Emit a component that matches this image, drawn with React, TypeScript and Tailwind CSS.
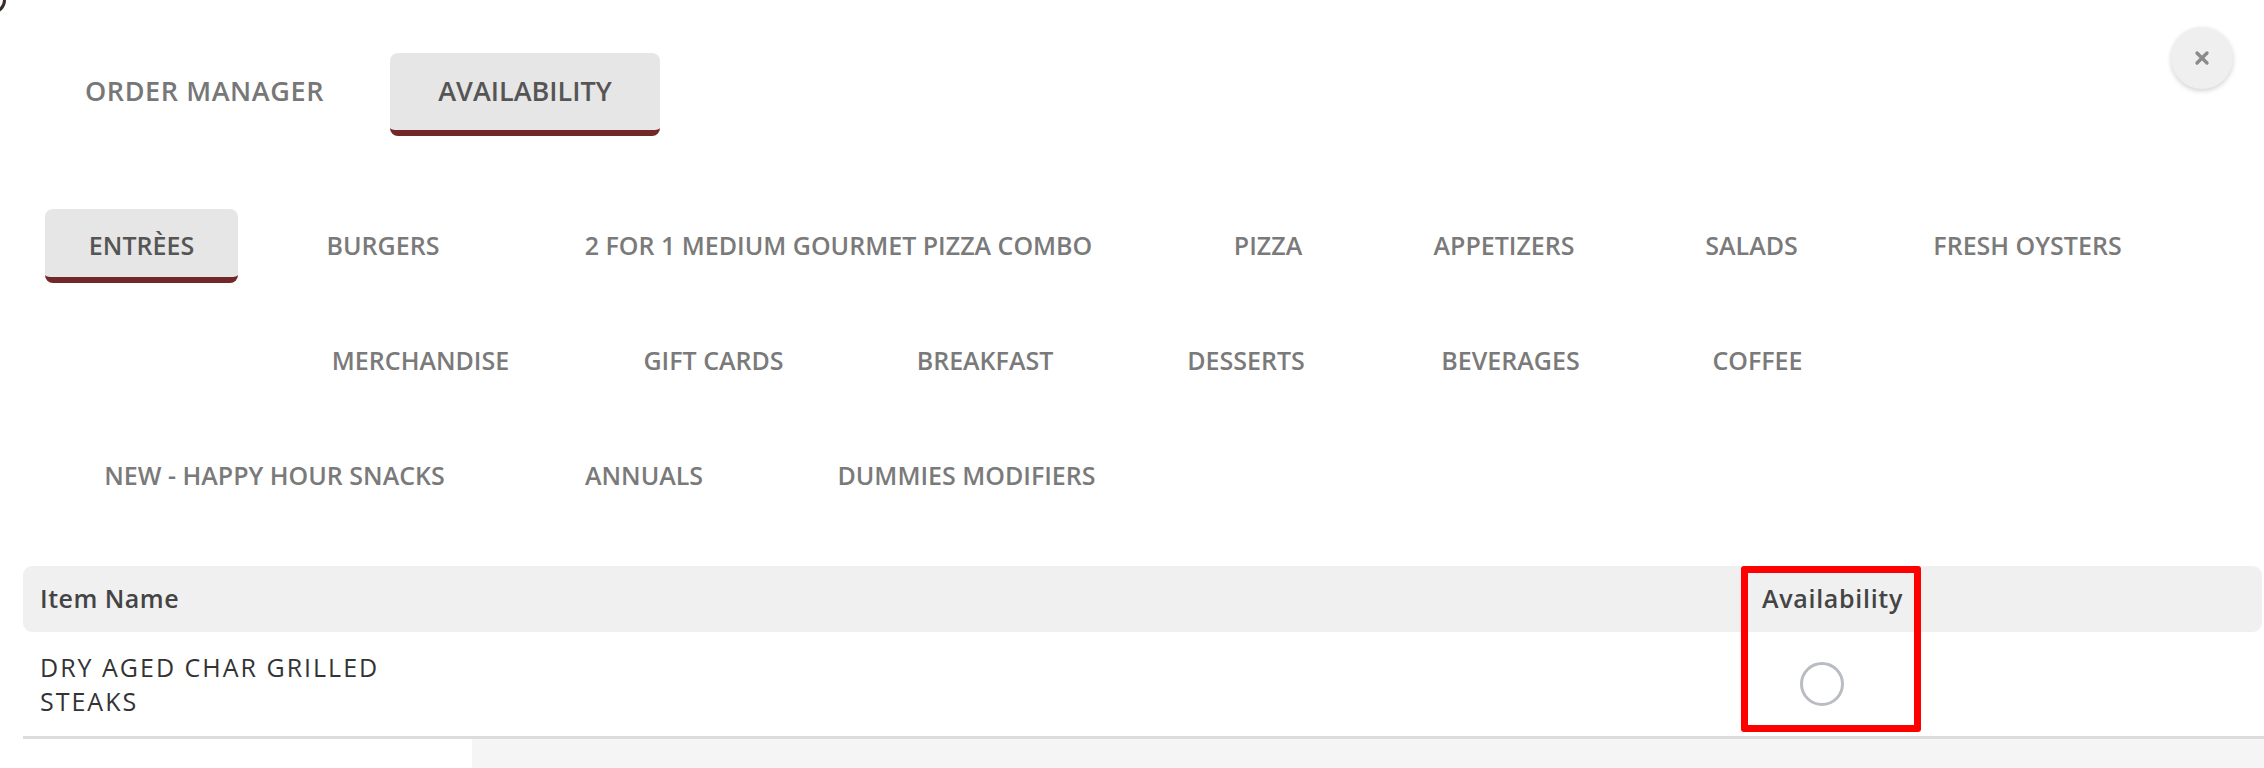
import React from "react";
import { X } from "lucide-react";

const F = "font-['Open_Sans','Liberation_Sans',sans-serif]";

function Cat({ label, cls, active = false }: { label: string; cls: string; active?: boolean }) {
  return (
    <div
      className={`${cls} h-[74px] shrink-0 flex items-center justify-center whitespace-nowrap text-[25px] font-semibold uppercase ${
        active
          ? "bg-[#e6e6e6] text-[#555555] rounded-[8px] border-b-[6px] border-[#722728] pt-[6px]"
          : "text-[#7a7a7a]"
      }`}
    >
      {label}
    </div>
  );
}

export default function App() {
  return (
    <div className={`relative w-[2264px] h-[768px] bg-white overflow-hidden ${F}`}>
      {/* corner fragment */}
      <div className="absolute left-[-22px] top-[-14px] w-[28px] h-[28px] rounded-full border-[3px] border-[#3a2a2a]" />

      {/* close button */}
      <button className="absolute left-[2171px] top-[27px] w-[62px] h-[62px] rounded-full bg-[#efefef] shadow-[0_2px_5px_rgba(0,0,0,0.18)] flex items-center justify-center">
        <X size={20} strokeWidth={4} color="#8b8b8b" />
      </button>

      {/* top tabs */}
      <div className="flex pt-[53px] pl-[35px] gap-[16px]">
        <div className="w-[339px] h-[83px] flex items-center justify-center pb-[6px] text-[27px] font-semibold tracking-[0.6px] text-[#777777] whitespace-nowrap">
          ORDER MANAGER
        </div>
        <div className="w-[270px] h-[83px] flex items-center justify-center bg-[#e6e6e6] rounded-[8px] border-b-[6px] border-[#722728] text-[27px] font-semibold text-[#555555] whitespace-nowrap">
          AVAILABILITY
        </div>
      </div>

      {/* categories */}
      <div className="flex flex-col gap-[41px] pt-[73px]">
        <div className="flex">
          <Cat label="Entrèes" cls="ml-[45px] w-[193px]" active />
          <Cat label="Burgers" cls="ml-[43px] w-[204px]" />
          <Cat label="2 for 1 Medium Gourmet Pizza Combo" cls="ml-[61px] w-[585px]" />
          <Cat label="Pizza" cls="ml-[56px] w-[162px]" />
          <Cat label="Appetizers" cls="ml-[36px] w-[238px]" />
          <Cat label="Salads" cls="ml-[36px] w-[185px]" />
          <Cat label="Fresh Oysters" cls="ml-[42px] w-[283px]" />
        </div>
        <div className="flex">
          <Cat label="Merchandise" cls="ml-[286px] w-[269px]" />
          <Cat label="Gift Cards" cls="ml-[43px] w-[231px]" />
          <Cat label="Breakfast" cls="ml-[40px] w-[232px]" />
          <Cat label="Desserts" cls="ml-[38px] w-[214px]" />
          <Cat label="Beverages" cls="ml-[40px] w-[235px]" />
          <Cat label="Coffee" cls="ml-[38px] w-[183px]" />
        </div>
        <div className="flex">
          <Cat label="New - Happy Hour Snacks" cls="ml-[58px] w-[433px]" />
          <Cat label="Annuals" cls="ml-[50px] w-[206px]" />
          <Cat label="Dummies Modifiers" cls="ml-[46px] w-[347px]" />
        </div>
      </div>

      {/* table */}
      <div className="relative ml-[23px] mt-[53px]">
        <div className="flex items-center h-[66px] bg-[#f0f0f0] rounded-[9px] mr-[2px] text-[25px] font-semibold text-[#444444]">
          <div className="w-[1739px] pl-[17px] tracking-[0.5px]">Item Name</div>
          <div className="tracking-[0.7px]">Availability</div>
        </div>
        <div className="flex items-center h-[107px] border-b-[3px] border-[#dcdcdc]">
          <div className="w-[1739px] pl-[17px]">
            <div className="w-[380px] text-[25px] leading-[34px] tracking-[2px] text-[#333333] uppercase">
              Dry aged char grilled steaks
            </div>
          </div>
          <div className="w-[120px] flex justify-center">
            <div className="w-[44px] h-[44px] rounded-full border-[3px] border-[#b9bdc3] bg-white" />
          </div>
        </div>
        <div className="flex h-[40px]">
          <div className="w-[449px] bg-white" />
          <div className="flex-1 bg-[#f5f5f5]" />
        </div>

        {/* annotation box */}
        <div className="absolute left-[1718px] top-0 w-[180px] h-[166px] border-[7px] border-[#ff0000] rounded-[3px]" />
      </div>
    </div>
  );
}
